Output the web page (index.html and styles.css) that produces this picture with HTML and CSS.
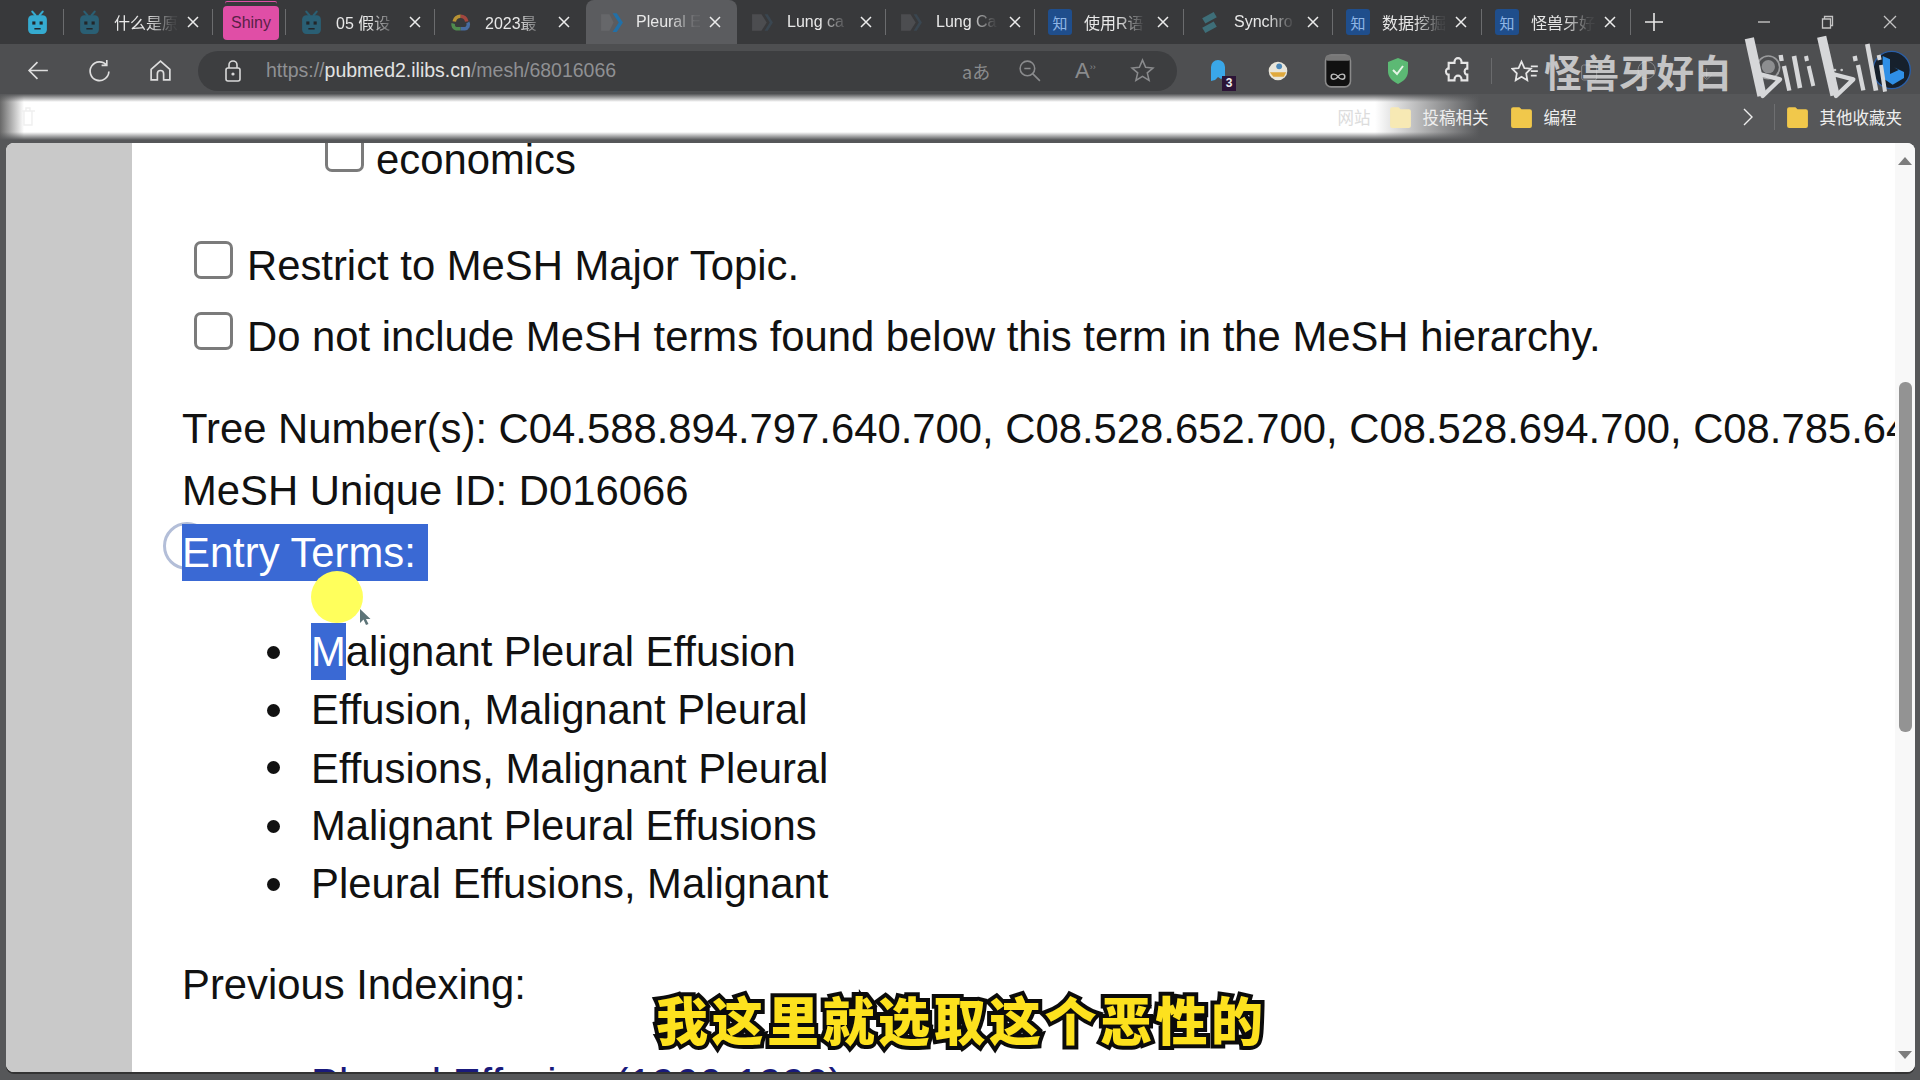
FILE: index.html
```html
<!DOCTYPE html>
<html lang="en">
<head>
<meta charset="utf-8">
<title>Pleural Effusion, Malignant</title>
<link rel="stylesheet" href="styles.css">
</head>
<body>
<svg class="defs" width="0" height="0" aria-hidden="true">
  <symbol id="tv" viewBox="0 0 24 24"><path d="M7 1.500l3 3.500M17 1.500l-3 3.500" fill="none" stroke="currentColor" stroke-width="2" stroke-linecap="round"/><rect x="3" y="5" width="18" height="18" rx="4" fill="currentColor"/><rect x="7" y="11" width="3" height="3" fill="#22262a"/><rect x="14" y="11" width="3" height="3" fill="#22262a"/><path d="M9 18h6" stroke="#22262a" stroke-width="1.500"/></symbol>
  <symbol id="chev-a" viewBox="0 0 24 24"><path d="M2 4h8l4 8-4 8H2z" fill="#66676a"/><path d="M13 3h4l6 9-6 9h-4l6-9z" fill="#2170a8"/></symbol>
  <symbol id="chev-b" viewBox="0 0 24 24"><path d="M2 4h9l5 8-5 8H2z" fill="#4c4d50"/><path d="M14 4h3l5 8-5 8h-3l5-8z" fill="#3a4650"/></symbol>
  <symbol id="close" viewBox="0 0 12 12"><path d="M1 1l10 10M11 1L1 11" fill="none" stroke="currentColor" stroke-width="1.500"/></symbol>
  <symbol id="folder" viewBox="0 0 20 24"><path d="M2 3h6l2 2h8a2 2 0 0 1 2 2v14a2 2 0 0 1-2 2H2a2 2 0 0 1-2-2V5a2 2 0 0 1 2-2z" fill="currentColor"/></symbol>
</svg>

<div class="window">
  <header class="tabbar">
    <div class="tab pinned first"><svg class="fav tv-bright"><use href="#tv"/></svg></div>
    <div class="tab"><svg class="fav tv-dim"><use href="#tv"/></svg><span class="title">什么是原</span><svg class="x"><use href="#close"/></svg></div>
    <div class="tab shiny-tab"><span class="shiny">Shiny</span></div>
    <div class="tab"><svg class="fav tv-dim"><use href="#tv"/></svg><span class="title">05 假设</span><svg class="x"><use href="#close"/></svg></div>
    <div class="tab noline"><svg class="fav cloud" viewBox="0 0 24 24"><path d="M12 6a6 6 0 0 1 6 5" fill="none" stroke="#b5493f" stroke-width="3.500"/><path d="M19 12a4 4 0 0 1-3 6h-4" fill="none" stroke="#4b76b2" stroke-width="3.500"/><path d="M12 18H8a4 4 0 0 1-3-5" fill="none" stroke="#549a52" stroke-width="3.500"/><path d="M6 11a6 6 0 0 1 6-5" fill="none" stroke="#cfa233" stroke-width="3.500"/></svg><span class="title">2023最</span><svg class="x"><use href="#close"/></svg></div>
    <div class="tab active"><svg class="fav"><use href="#chev-a"/></svg><span class="title">Pleural E</span><svg class="x"><use href="#close"/></svg></div>
    <div class="tab"><svg class="fav"><use href="#chev-b"/></svg><span class="title">Lung ca</span><svg class="x"><use href="#close"/></svg></div>
    <div class="tab"><svg class="fav"><use href="#chev-b"/></svg><span class="title">Lung Ca</span><svg class="x"><use href="#close"/></svg></div>
    <div class="tab"><span class="fav zhi">知</span><span class="title">使用R语</span><svg class="x"><use href="#close"/></svg></div>
    <div class="tab"><svg class="fav" viewBox="0 0 24 24"><path d="M5 8l11-6 3 5-11 6zM5 17l11-6 3 5-11 6z" fill="#3e6e78"/></svg><span class="title">Synchro</span><svg class="x"><use href="#close"/></svg></div>
    <div class="tab"><span class="fav zhi">知</span><span class="title">数据挖掘</span><svg class="x"><use href="#close"/></svg></div>
    <div class="tab"><span class="fav zhi">知</span><span class="title">怪兽牙好</span><svg class="x"><use href="#close"/></svg></div>
    <div class="newtab"><svg viewBox="0 0 20 20"><path d="M10 1v18M1 10h18" stroke="currentColor" stroke-width="1.600"/></svg></div>
    <div class="winctl">
      <svg viewBox="0 0 14 14"><path d="M1 7h12" stroke="currentColor" stroke-width="1.400"/></svg>
      <svg viewBox="0 0 14 14"><path d="M2.500 4h8v9h-8zM4.500 4V1.500h8v9h-2" fill="none" stroke="currentColor" stroke-width="1.300"/></svg>
      <svg viewBox="0 0 14 14"><path d="M1 1l12 12M13 1L1 13" stroke="currentColor" stroke-width="1.300"/></svg>
    </div>
  </header>

  <div class="toolbar">
    <svg class="tbtn" viewBox="0 0 24 24"><path d="M21 12H3M11 4l-8 8 8 8" fill="none" stroke="currentColor" stroke-width="1.600"/></svg>
    <svg class="tbtn" viewBox="0 0 24 24"><path d="M19 7a9 9 0 1 0 2 6M19 2v5h-5" fill="none" stroke="currentColor" stroke-width="1.600"/></svg>
    <svg class="tbtn" viewBox="0 0 24 24"><path d="M3 11l9-8 9 8v10h-6v-6a3 3 0 0 0-6 0v6H3z" fill="none" stroke="currentColor" stroke-width="1.600"/></svg>
    <div class="omni">
      <svg class="lock" viewBox="0 0 18 24"><path d="M5 9V6a4 4 0 0 1 8 0v3" fill="none" stroke="currentColor" stroke-width="1.600"/><rect x="2" y="9" width="14" height="13" rx="2" fill="none" stroke="currentColor" stroke-width="1.600"/><circle cx="9" cy="15" r="1.600" fill="currentColor"/></svg>
      <span class="url">https://<b>pubmed2.ilibs.cn</b>/mesh/68016066</span>
      <div class="omni-tools">
        <span class="aa">aあ</span>
        <svg viewBox="0 0 24 24"><circle cx="10" cy="10" r="7" fill="none" stroke="currentColor" stroke-width="1.500"/><path d="M15 15l7 7M7 10h6" stroke="currentColor" stroke-width="1.500"/></svg>
        <span class="aloud">A<sup>››</sup></span>
        <svg viewBox="0 0 24 24"><path d="M12 2l3 7 7 .6-5.400 4.700 1.700 7.200L12 17.700 5.700 21.500l1.700-7.200L2 9.600 9 9z" fill="none" stroke="currentColor" stroke-width="1.500"/></svg>
      </div>
    </div>
    <div class="exts">
      <span class="ext"><svg viewBox="0 0 24 28"><path d="M5 24V10a7 7 0 0 1 14 0v9l-4 3-3-2-3 3z" fill="#3aa7e8"/></svg><i class="badge">3</i></span>
      <span class="ext"><svg viewBox="0 0 24 24"><circle cx="12" cy="12" r="8" fill="#e9e6da"/><path d="M5 13h14l-2 4H8z" fill="#e0a93c"/><circle cx="13" cy="8" r="2.500" fill="#4c88b8"/></svg></span>
      <span class="ext mask"><svg viewBox="0 0 24 30"><rect x="1" y="1" width="22" height="28" rx="5" fill="#111" stroke="#8a8a8a" stroke-width="1.400"/><rect x="1" y="1" width="22" height="5" rx="2" fill="#777"/><path d="M12 20c-2-3-6-3-6 0s4 3 6 0c2-3 6-3 6 0s-4 3-6 0" fill="none" stroke="#bbb" stroke-width="1.300"/></svg></span>
      <span class="ext"><svg viewBox="0 0 24 28"><path d="M12 1l10 4v9c0 6-4 10-10 13C6 24 2 20 2 14V5z" fill="#5cb974"/><path d="M7 13l4 4 6-8" fill="none" stroke="#e6f4e6" stroke-width="2"/></svg></span>
      <span class="ext"><svg viewBox="0 0 24 24"><path d="M9 4a3 3 0 0 1 6 0l0 1h5v5h-1a3 3 0 0 0 0 5h1v5h-5v-1a3 3 0 0 0-6 0v1H4v-5H3a3 3 0 0 1 0-5h1V5h5z" fill="none" stroke="#e6e6e6" stroke-width="1.800"/></svg></span>
      <span class="sep"></span>
      <span class="ext star"><svg viewBox="0 0 24 24"><path d="M9 4l2.500 5.500 5.500.5-4 4 1 6-5-3-5 3 1-6-4-4 5.500-.5zM17 8h6M17 12h6M17 16h5" fill="none" stroke="#e6e6e6" stroke-width="1.500"/></svg></span>
    </div>
  </div>

  <nav class="bookmarks">
    <svg class="trash" viewBox="0 0 16 20"><path d="M1 4h14M4 4v14h8V4M6 4V1h4v3" fill="none" stroke="#efefef" stroke-width="1.400"/></svg>
    <span class="faint">网站</span>
    <span class="bm dim"><svg><use href="#folder"/></svg><span>投稿相关</span></span>
    <span class="bm second"><svg><use href="#folder"/></svg><span>编程</span></span>
    <svg class="more" viewBox="0 0 10 18"><path d="M1 1l8 8-8 8" fill="none" stroke="currentColor" stroke-width="1.400"/></svg>
    <span class="bm-sep"></span>
    <span class="bm"><svg><use href="#folder"/></svg><span>其他收藏夹</span></span>
  </nav>

  <div class="viewport">
    <aside class="rail"></aside>
    <main class="doc">
      <div class="row-econ"><span class="box"></span><span>economics</span></div>
      <div class="row-check first-check"><span class="box"></span><span>Restrict to MeSH Major Topic.</span></div>
      <div class="row-check"><span class="box"></span><span>Do not include MeSH terms found below this term in the MeSH hierarchy.</span></div>
      <p class="line tree">Tree Number(s): C04.588.894.797.640.700, C08.528.652.700, C08.528.694.700, C08.785.640.700</p>
      <p class="line">MeSH Unique ID: D016066</p>
      <p class="line entry"><span class="ring"></span><span class="sel">Entry Terms:</span></p>
      <ul class="terms">
        <li><span class="sel-m">M</span>alignant Pleural Effusion</li>
        <li>Effusion, Malignant Pleural</li>
        <li class="nudge">Effusions, Malignant Pleural</li>
        <li>Malignant Pleural Effusions</li>
        <li>Pleural Effusions, Malignant</li>
      </ul>
      <p class="line prev">Previous Indexing:</p>
      <p class="link">Pleural Effusion (1966-1990)</p>
    </main>
    <div class="scrollbar">
      <span class="arrow up"></span>
      <span class="thumb"></span>
      <span class="arrow down"></span>
    </div>
  </div>
</div>

<div class="spot"></div>
<svg class="cursor" viewBox="0 0 12 18"><path d="M1 1v14l3.500-3.500L7 17l2.500-1-2.500-5h4.500z" fill="#5d7478"/></svg>

<svg class="wm-art" viewBox="0 0 1200 330" aria-hidden="true">
  <g fill="none" stroke="#b9babc" stroke-width="3" opacity=".55">
    <rect x="185" y="135" width="45" height="45" rx="6"/>
    <circle cx="380" cy="150" r="26"/>
    <path d="M560 145v30M545 165l15 14 15-14"/>
  </g>
  <circle cx="745" cy="142" r="34" fill="none" stroke="#9a9b9d" stroke-width="5"/>
  <circle cx="745" cy="140" r="20" fill="#8d8e90"/>
  <g fill="#c9cacc"><circle cx="925" cy="150" r="4"/><circle cx="945" cy="150" r="4"/><circle cx="965" cy="150" r="4"/></g>
  <circle cx="1115" cy="150" r="56" fill="#16202c" stroke="#2a5fa8" stroke-width="4"/>
  <path d="M1088 108l22 10v44l26-12-14-8 30 14v18l-34 20-30-20z" fill="#2f8fe6"/>
  <g fill="none" stroke="#d6d7d9" stroke-linecap="butt">
    <path d="M688 55l38 172" stroke-width="28"/>
    <path d="M718 162l62 16-52 50z" stroke-width="13" stroke-linejoin="round"/>
    <path d="M782 105l3 18M792 138l16 74" stroke-width="13"/>
    <path d="M822 108l18 96" stroke-width="14"/>
    <path d="M858 108l3 15M866 138l14 60" stroke-width="12"/>
    <path d="M905 50l40 176" stroke-width="28"/>
    <path d="M938 162l62 16-52 50z" stroke-width="13" stroke-linejoin="round"/>
    <path d="M1004 108l3 15M1014 135l16 76" stroke-width="13"/>
    <path d="M1042 72l26 140" stroke-width="14"/>
    <path d="M1076 105l3 15M1083 135l12 80" stroke-width="12"/>
  </g>
</svg>
<div class="wm-name">怪兽牙好白</div>
<div class="subtitle">我这里就选取这个恶性的</div>
</body>
</html>
```
FILE: styles.css
```css
* { box-sizing: border-box; }
html, body { margin: 0; height: 100%; overflow: hidden; }
body { background: #343537; font-family: "Liberation Sans", Arial, sans-serif; position: relative; }
.defs { position: absolute; }

.window { width: 1920px; height: 1080px; display: flex; flex-direction: column; background: #565759; }

/* tab strip */
.tabbar { height: 44px; flex: none; display: flex; align-items: stretch; background: #38393b; color: #e8e8e8; font-family: "Liberation Sans", "Noto Sans CJK SC", sans-serif; }
.tab { width: 149px; flex: none; display: flex; align-items: center; padding: 0 0 0 13px; position: relative; }
.tab::after { content: ""; position: absolute; right: 0; top: 9px; bottom: 9px; width: 1px; background: #6b6c6e; }
.tab.noline { width: 151px; }
.tab.noline::after, .tab.active::after { display: none; }
.tab.pinned { width: 64px; padding: 0 0 0 25px; }
.tab.shiny-tab { width: 73px; padding: 0 0 0 10px; }
.tab.active { width: 151px; background: #5b5c5f; border-radius: 8px 8px 0 0; }
.fav { width: 25px; height: 25px; flex: none; }
.tv-bright { color: #35abd0; }
.tv-dim { color: #2a5f74; }
.cloud { opacity: .85; }
.zhi { width: 24px; height: 26px; display: flex; align-items: center; justify-content: center; background: #1f4e8c; color: #8fb6e6; border-radius: 3px; font: 15px "Noto Sans CJK SC", sans-serif; }
.title { width: 64px; margin-left: 12px; font-size: 16px; white-space: nowrap; overflow: hidden; -webkit-mask-image: linear-gradient(90deg, #000 52%, rgba(0,0,0,.08) 92%); mask-image: linear-gradient(90deg, #000 52%, rgba(0,0,0,.08) 92%); flex: none; }
.x { width: 12px; height: 12px; margin-left: 9px; flex: none; color: #ececec; }
.shiny { width: 56px; height: 34px; margin-top: 1px; display: flex; align-items: center; justify-content: center; background: #e04ea6; color: #5a2148; border-radius: 4px; font-size: 16px; box-shadow: 0 -6px 0 -2px #38393b, 0 -7px 0 -2px #e04ea6; }
.newtab { width: 46px; flex: none; display: flex; align-items: center; justify-content: center; color: #e8e8e8; }
.newtab svg { width: 20px; height: 20px; }
.winctl { margin-left: auto; display: flex; align-items: center; gap: 49px; padding-right: 23px; color: #c4c4c4; }
.winctl svg { width: 14px; height: 14px; }

/* toolbar */
.toolbar { height: 50px; flex: none; display: flex; align-items: center; padding: 3px 0 0 26px; background: #4e4f51; color: #d8d8d8; }
.tbtn { width: 25px; height: 25px; margin-right: 36px; flex: none; color: #dedede; }
.tbtn:nth-child(3) { margin-right: 25px; }
.omni { width: 979px; height: 40px; flex: none; display: flex; align-items: center; padding-left: 26px; background: #3d3e40; border-radius: 20px; }
.lock { width: 18px; height: 24px; color: #d8d8d8; flex: none; }
.url { margin-left: 24px; font-size: 19.500px; color: #8f9093; }
.url b { font-weight: 400; color: #e2e2e2; }
.omni-tools { margin-left: auto; display: flex; align-items: center; gap: 30px; padding-right: 22px; color: #8a8b8d; }
.omni-tools svg { width: 25px; height: 25px; }
.aa { font: 18px "Noto Sans CJK JP", sans-serif; width: 25px; white-space: nowrap; }
.aloud { font-size: 22px; width: 25px; line-height: 1; margin-left: 3px; }
.aloud sup { font-size: 9px; }
.exts { display: flex; align-items: center; margin-left: 26px; gap: 30px; }
.ext { position: relative; width: 30px; height: 32px; display: flex; align-items: center; justify-content: center; }
.ext svg { width: 28px; height: 28px; flex: none; }
.ext.mask svg { width: 34px; height: 34px; }
.badge { position: absolute; right: -3px; bottom: -4px; width: 14px; height: 15px; display: flex; align-items: center; justify-content: center; background: #2c1437; color: #eee; font: 700 12px "Liberation Sans", sans-serif; }
.sep { width: 1px; height: 26px; background: #6a6b6d; margin: 0 -12px; }

/* bookmarks */
.bookmarks { height: 49px; flex: none; display: flex; align-items: center; justify-content: flex-end; padding: 0 18px 4px 0; color: #eee; font: 16.500px "Noto Sans CJK SC", sans-serif; background:
  linear-gradient(180deg, #565759 0, rgba(86,87,89,0) 8px, rgba(86,87,89,0) 38px, #565759 46px),
  linear-gradient(90deg, #686868 0, #fff 24px, #fff 1375px, #565759 1480px); }
.trash { width: 16px; height: 20px; margin-right: auto; margin-left: 20px; }
.faint { margin-right: -4px; color: #dcdcdc; }
.bm { display: flex; align-items: center; gap: 12px; margin-left: 23px; white-space: nowrap; }
.bm.second { margin-left: 22px; }
.bm svg { width: 21px; height: 25px; color: #f1c84b; flex: none; }
.bm.dim svg { color: #f7e9b4; }
.more { width: 10px; height: 18px; margin-left: 166px; color: #eee; }
.bm-sep { width: 1px; height: 26px; background: #6e6f71; margin-left: 21px; }
.bm-sep + .bm { margin-left: 12px; }

/* page */
.viewport { flex: 1; min-height: 0; margin: 0 5px 8px 6px; display: flex; background: #fff; border-radius: 8px; overflow: hidden; box-shadow: 0 2px 0 #333; }
.rail { width: 126px; flex: none; background: #c9c9c9; }
.doc { flex: 1; min-width: 0; overflow: hidden; padding-left: 50px; font-size: 41.800px; color: #111; }
.row-econ { display: flex; align-items: center; height: 50px; margin-left: 143px; margin-top: -8px; gap: 12px; }
.row-econ .box { margin-top: -14px; }
.row-check { display: flex; align-items: center; height: 60px; margin-left: 12px; gap: 14px; margin-top: 11px; }
.first-check { margin-top: 51px; }
.box { width: 39px; height: 38px; flex: none; border: 3px solid #7b7b7b; border-radius: 7px; background: #fff; margin-top: -12px; }
.line { margin: 0; height: 62px; line-height: 62px; white-space: nowrap; }
.tree { margin-top: 31px; }
.entry { position: relative; }
.ring { position: absolute; left: -19px; top: 0; width: 48px; height: 48px; border: 3px solid #b3bed8; border-radius: 50%; }
.sel { position: relative; display: inline-block; height: 57px; line-height: 57px; padding-right: 12px; background: #3a69d4; color: #fff; }
.sel-m { display: inline-block; height: 57px; line-height: 57px; background: #3a69d4; color: #fff; }
.terms { margin: 39px 0 0; padding: 0 0 0 129px; list-style: none; }
.terms li { position: relative; height: 57.500px; line-height: 57px; white-space: nowrap; }
.terms li::before { content: ""; position: absolute; left: -44px; top: 23px; width: 13px; height: 13px; border-radius: 50%; background: #111; }
.terms .nudge { padding-top: 2px; height: 59px; }
.prev { margin-top: 42px; }
.link { margin: 39px 0 0 129px; line-height: 57px; white-space: nowrap; color: #1a1a7c; }

/* scrollbar */
.scrollbar { width: 20px; flex: none; display: flex; flex-direction: column; align-items: center; background: #f8f8f8; padding: 14px 0 13px; }
.arrow { width: 0; height: 0; border-left: 7px solid transparent; border-right: 7px solid transparent; flex: none; }
.up { border-bottom: 8px solid #7d7d7d; }
.down { border-top: 8px solid #7d7d7d; margin-top: auto; }
.thumb { width: 13px; height: 350px; margin-top: 217px; background: #939393; border-radius: 6px; flex: none; }

/* overlays */
.spot { position: absolute; left: 311px; top: 571px; width: 52px; height: 52px; border-radius: 50%; background: radial-gradient(circle, #ffff5c 0 80%, #f6f66a 100%); }
.cursor { position: absolute; left: 359px; top: 608px; width: 12px; height: 18px; }
.wm-art { position: absolute; left: 1520px; top: 20px; width: 400px; height: 110px; }
.wm-name { position: absolute; left: 1544px; top: 45px; font: 700 37.500px/1.4 "Noto Sans CJK SC", sans-serif; color: rgba(224,224,224,.82); }
.subtitle { position: absolute; left: 656px; top: 988px; font: 900 52px/1.2 "Noto Sans CJK SC", sans-serif; letter-spacing: 3.500px; white-space: nowrap; color: #fde11e; -webkit-text-stroke: 8px #0b0b0b; paint-order: stroke fill; }
```
